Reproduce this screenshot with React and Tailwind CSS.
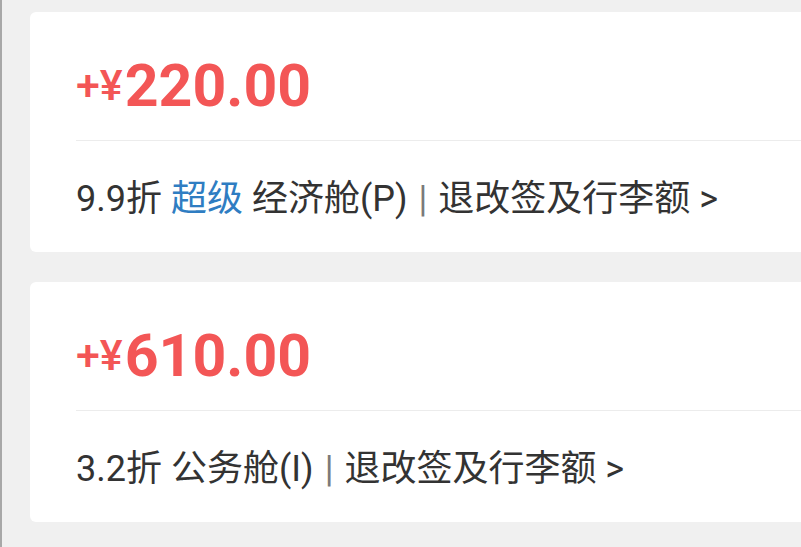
export default function App() {
  const font = { fontFamily: 'Roboto, "Noto Sans CJK SC", sans-serif' };
  const Card = ({ price, children }) => (
    <div className="ml-[30px] w-[800px] rounded-[6px] bg-white pl-[46px]">
      <div className="flex h-[129px] items-center border-b border-[#ececec] pt-[18px] text-[#f35656]">
        <span className="text-[43px] font-medium leading-none">+¥</span>
        <span className="ml-[2px] text-[59px] font-bold leading-none">{price}</span>
      </div>
      <div className="flex h-[111px] items-center pt-[4px] text-[36px] leading-none text-[#333333]">
        {children}
      </div>
    </div>
  );
  return (
    <div
      className="flex h-[547px] w-[801px] flex-col gap-[30px] overflow-hidden border-l-2 border-[#a8a8a8] bg-[#f0f0f0] pt-[12px]"
      style={font}
    >
      <div className="-ml-[2px]">
        <Card price="220.00">
          <span>9.9折</span>
          <span className="ml-[9px] text-[#2f7dc2]">超级</span>
          <span className="ml-[9px]">经济舱(P)</span>
          <span className="mx-[11px] text-[#7a7a7a]">|</span>
          <span>退改签及行李额 &gt;</span>
        </Card>
      </div>
      <div className="-ml-[2px]">
        <Card price="610.00">
          <span>3.2折</span>
          <span className="ml-[9px]">公务舱(I)</span>
          <span className="mx-[11px] text-[#7a7a7a]">|</span>
          <span>退改签及行李额 &gt;</span>
        </Card>
      </div>
    </div>
  );
}
